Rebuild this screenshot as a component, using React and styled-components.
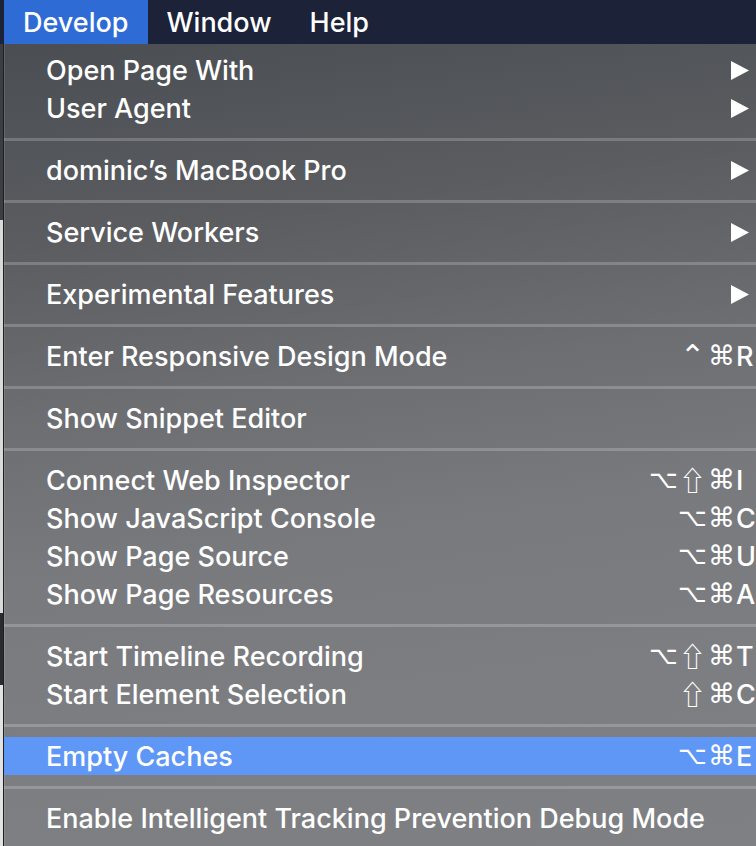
import React from "react";
import styled, { createGlobalStyle } from "styled-components";

const Global = createGlobalStyle`
  html, body { margin: 0; padding: 0; }
  body {
    width: 756px;
    height: 846px;
    overflow: hidden;
    background: #dcdcdc;
    font-family: Inter, "Noto Sans", "DejaVu Sans", sans-serif;
    -webkit-font-smoothing: antialiased;
  }
`;

const Screen = styled.div`
  width: 756px;
  height: 846px;
  display: flex;
  flex-direction: column;
  overflow: hidden;
`;

const MenuBar = styled.div`
  height: 44px;
  flex: none;
  display: flex;
  padding-left: 4px;
  background: #1c2238;
`;

const BarItem = styled.div`
  height: 44px;
  padding: 0 19px;
  display: flex;
  align-items: center;
  font-size: 27px;
  font-weight: 500;
  color: #fff;
  background: ${(p) => (p.$active ? "#2e6bd5" : "transparent")};
`;

const Body = styled.div`
  flex: 1;
  display: flex;
  min-height: 0;
`;

const Backdrop = styled.div`
  width: 3px;
  flex: none;
  background: linear-gradient(
    180deg,
    #3b3e43 0px,
    #3b3e43 176px,
    #d9d9d9 176px,
    #d9d9d9 569px,
    #2a2b2d 569px,
    #2a2b2d 641px,
    #e2e2e2 641px
  );
`;

const Menu = styled.div`
  width: 757px;
  flex: none;
  padding-top: 7px;
  box-sizing: border-box;
  border-left: 1px solid #1e1f22;
  box-shadow: inset 1px 0 0 rgba(255, 255, 255, 0.12);
  background: linear-gradient(
    172deg,
    #4a4e52 0%,
    #5a5c60 22%,
    #6d6e72 42%,
    #797a7e 60%,
    #7d7e81 80%,
    #7f8083 100%
  );
  display: flex;
  flex-direction: column;
`;

const Row = styled.div`
  height: 38px;
  flex: none;
  display: flex;
  align-items: center;
  padding-left: 42px;
  color: #fff;
  font-size: 27px;
  font-weight: 500;
  background: ${(p) => (p.$selected ? "#5e97f6" : "transparent")};
`;

const Label = styled.span`
  flex: 1;
  white-space: nowrap;
`;

const Separator = styled.div`
  height: 3px;
  flex: none;
  margin: 11px 0 10px;
  background: rgba(255, 255, 255, 0.2);
`;

const Arrow = styled.svg`
  width: 18px;
  height: 19px;
  margin-right: 11px;
  flex: none;
`;

const Shortcut = styled.span`
  display: flex;
  align-items: center;
  flex: none;
`;

const Mod = styled.span`
  width: 29px;
  height: 38px;
  line-height: 38px;
  text-align: center;
  overflow: hidden;
  font-family: ${(p) => p.$font}, "DejaVu Sans", sans-serif;
  font-size: ${(p) => p.$size}px;
  font-weight: ${(p) => p.$weight};
`;

const Key = styled.span`
  width: 24px;
  text-align: left;
  font-size: 27px;
`;

const modStyle = {
  "\u2325": { font: '"DejaVu Sans"', size: 25, weight: 400 },
  "\u21E7": { font: '"Noto Sans CJK JP"', size: 27, weight: 400 },
  "\u2318": { font: '"DejaVu Sans"', size: 27, weight: 400 },
  "\u2303": { font: '"DejaVu Sans"', size: 30, weight: 400 },
};

const SubArrow = () => (
  <Arrow viewBox="0 0 18 19">
    <polygon points="0,0 18,9.5 0,19" fill="#fff" />
  </Arrow>
);

const groups = [
  [{ label: "Open Page With", sub: true }, { label: "User Agent", sub: true }],
  [{ label: "dominic\u2019s MacBook Pro", sub: true }],
  [{ label: "Service Workers", sub: true }],
  [{ label: "Experimental Features", sub: true }],
  [{ label: "Enter Responsive Design Mode", mods: ["\u2303", "\u2318"], key: "R" }],
  [{ label: "Show Snippet Editor" }],
  [
    { label: "Connect Web Inspector", mods: ["\u2325", "\u21E7", "\u2318"], key: "I" },
    { label: "Show JavaScript Console", mods: ["\u2325", "\u2318"], key: "C" },
    { label: "Show Page Source", mods: ["\u2325", "\u2318"], key: "U" },
    { label: "Show Page Resources", mods: ["\u2325", "\u2318"], key: "A" },
  ],
  [
    { label: "Start Timeline Recording", mods: ["\u2325", "\u21E7", "\u2318"], key: "T" },
    { label: "Start Element Selection", mods: ["\u21E7", "\u2318"], key: "C" },
  ],
  [{ label: "Empty Caches", mods: ["\u2325", "\u2318"], key: "E", selected: true }],
  [{ label: "Enable Intelligent Tracking Prevention Debug Mode" }],
];

export default function App() {
  return (
    <>
      <Global />
      <Screen>
        <MenuBar>
          <BarItem $active>Develop</BarItem>
          <BarItem>Window</BarItem>
          <BarItem>Help</BarItem>
        </MenuBar>
        <Body>
          <Backdrop />
          <Menu>
            {groups.map((g, gi) => (
              <React.Fragment key={gi}>
                {gi > 0 && <Separator />}
                {g.map((it) => (
                  <Row key={it.label} $selected={it.selected}>
                    <Label>{it.label}</Label>
                    {it.sub && <SubArrow />}
                    {it.key && (
                      <Shortcut>
                        {it.mods.map((m, i) => {
                          const s = modStyle[m];
                          return (
                            <Mod key={i} $font={s.font} $size={s.size} $weight={s.weight}>
                              {m}
                            </Mod>
                          );
                        })}
                        <Key>{it.key}</Key>
                      </Shortcut>
                    )}
                  </Row>
                ))}
              </React.Fragment>
            ))}
          </Menu>
        </Body>
      </Screen>
    </>
  );
}
